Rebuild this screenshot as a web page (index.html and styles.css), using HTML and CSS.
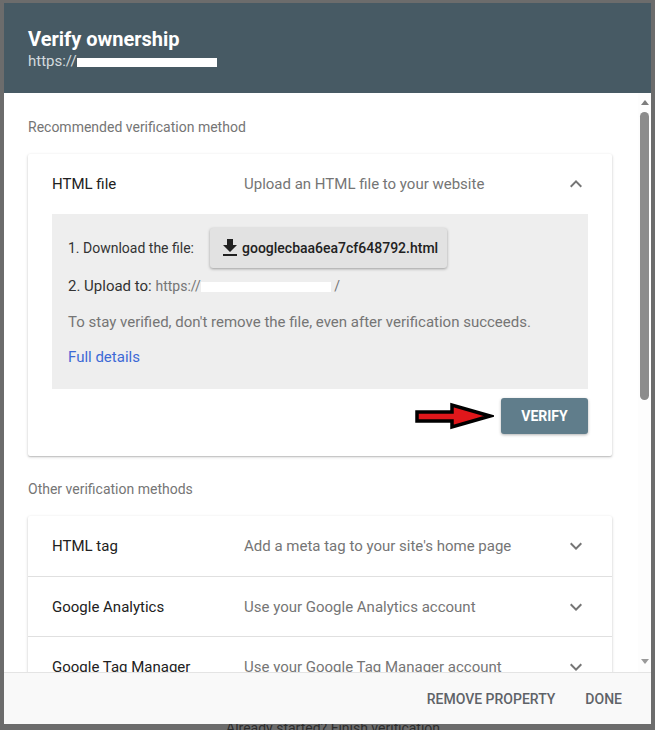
FILE: index.html
```html
<!DOCTYPE html>
<html lang="en">
<head>
<meta charset="utf-8">
<title>Verify ownership</title>
<link rel="stylesheet" href="styles.css">
</head>
<body>
<div class="page">
  <div class="dialog">
    <header class="dlg-head">
      <h1 class="dlg-title">Verify ownership</h1>
      <div class="dlg-url">https://<span class="redact redact-head"></span></div>
    </header>
    <div class="dlg-body">
      <div class="scroll-content">
        <div class="section-label">Recommended verification method</div>
        <div class="card">
          <div class="method-row">
            <div class="method-name">HTML file</div>
            <div class="method-desc">Upload an HTML file to your website</div>
            <svg class="chev" viewBox="0 0 24 24" width="24" height="24"><path d="M12 8l-6 6 1.41 1.41L12 10.83l4.59 4.58L18 14z"/></svg>
          </div>
          <div class="panel">
            <div class="step step-download">
              <span>1. Download the file:</span>
              <span class="file-btn"><svg class="dl-icon" viewBox="0 0 24 24" width="24" height="24"><path d="M19 9h-4V3H9v6H5l7 7 7-7zM5 18v2h14v-2H5z"/></svg>googlecbaa6ea7cf648792.html</span>
            </div>
            <div class="step step-upload">2. Upload to: <span class="muted">https://<span class="redact redact-url"></span> /</span></div>
            <div class="note">To stay verified, don't remove the file, even after verification succeeds.</div>
            <div class="link-row"><a class="link">Full details</a></div>
          </div>
          <div class="card-actions">
            <svg class="arrow" viewBox="0 0 80 28" width="80" height="28"><polygon points="3,10 38,10 38,3 76,14 38,25 38,19 3,19" fill="#e0171b" stroke="#000" stroke-width="3.5" stroke-linejoin="miter"/></svg>
            <span class="verify-btn">VERIFY</span>
          </div>
        </div>
        <div class="section-label section-label-2">Other verification methods</div>
        <div class="card list-card">
          <div class="method-row">
            <div class="method-name">HTML tag</div>
            <div class="method-desc">Add a meta tag to your site's home page</div>
            <svg class="chev" viewBox="0 0 24 24" width="24" height="24"><path d="M16.59 8.59L12 13.170 7.41 8.59 6 10l6 6 6-6z"/></svg>
          </div>
          <div class="method-row">
            <div class="method-name">Google Analytics</div>
            <div class="method-desc">Use your Google Analytics account</div>
            <svg class="chev" viewBox="0 0 24 24" width="24" height="24"><path d="M16.59 8.59L12 13.17 7.41 8.59 6 10l6 6 6-6z"/></svg>
          </div>
          <div class="method-row">
            <div class="method-name">Google Tag Manager</div>
            <div class="method-desc">Use your Google Tag Manager account</div>
            <svg class="chev" viewBox="0 0 24 24" width="24" height="24"><path d="M16.59 8.59L12 13.17 7.41 8.59 6 10l6 6 6-6z"/></svg>
          </div>
        </div>
      </div>
      <div class="scrollbar">
        <span class="sb-up"></span>
        <span class="sb-thumb"></span>
        <span class="sb-down"></span>
      </div>
    </div>
    <footer class="dlg-foot">
      <span class="foot-btn">REMOVE PROPERTY</span>
      <span class="foot-btn">DONE</span>
    </footer>
  </div>
  <div class="behind">Already started? Finish verification</div>
</div>
</body>
</html>
```

FILE: styles.css
```css
html, body {
  margin: 0;
  padding: 0;
}
body {
  background: #6c6c6c;
  font-family: Roboto, "Liberation Sans", Arial, sans-serif;
  width: 655px;
  height: 730px;
  overflow: hidden;
}
.page {
  padding: 3px 4px 0 4px;
}
.dialog {
  position: relative;
  z-index: 1;
  height: 721px;
  background: #fff;
  display: flex;
  flex-direction: column;
  overflow: hidden;
}
.dlg-head {
  flex: none;
  box-sizing: border-box;
  height: 90px;
  background: #475a64;
  padding: 24px 24px 0 24px;
}
.dlg-title {
  margin: 0;
  font-size: 20px;
  line-height: 24px;
  font-weight: 700;
  color: #fff;
}
.dlg-url {
  font-size: 15px;
  line-height: 20px;
  color: #d3dade;
}
.redact {
  display: inline-block;
  background: #fff;
}
.redact-head {
  width: 140px;
  height: 9px;
  vertical-align: -1px;
}
.dlg-body {
  flex: 1;
  min-height: 0;
  display: flex;
  overflow: hidden;
}
.scroll-content {
  flex: 1;
  min-width: 0;
  padding: 24px 26px 0 24px;
  overflow: hidden;
}
.section-label {
  font-size: 14px;
  line-height: 20px;
  color: #757575;
  margin-bottom: 17px;
}
.section-label-2 {
  margin-top: 23px;
}
.card {
  background: #fff;
  border-radius: 2px;
  box-shadow: 0 1px 3px rgba(0, 0, 0, 0.22), 0 1px 1px rgba(0, 0, 0, 0.1);
}
.method-row {
  height: 60px;
  display: flex;
  align-items: center;
  padding: 0 24px;
  font-size: 15px;
}
.list-card .method-row + .method-row {
  border-top: 1px solid #e0e0e0;
  height: 59px;
}
.method-name {
  flex: none;
  width: 192px;
  color: #212121;
}
.method-desc {
  flex: 1;
  color: #757575;
}
.chev {
  flex: none;
  fill: #757575;
}
.panel {
  margin: 0 24px;
  background: #eeeeee;
  padding: 14px 16px 22px;
}
.step {
  font-size: 14px;
  line-height: 20px;
  color: #333;
}
.step-download {
  display: flex;
  align-items: center;
  gap: 16px;
  height: 40px;
}
.file-btn {
  display: flex;
  align-items: center;
  height: 40px;
  box-sizing: border-box;
  padding: 0 9px 0 8px;
  background: #e2e2e2;
  border-radius: 3px;
  box-shadow: 0 1px 3px rgba(0, 0, 0, 0.35);
  font-weight: 500;
  color: #212121;
}
.dl-icon {
  fill: #212121;
  flex: none;
}
.step-upload {
  margin-top: 8px;
  font-size: 15px;
}
.muted {
  color: #757575;
  font-size: 14px;
}
.redact-url {
  width: 130px;
  height: 10px;
  vertical-align: -1px;
}
.note {
  margin-top: 16px;
  font-size: 15px;
  line-height: 20px;
  color: #757575;
}
.link-row {
  margin-top: 15px;
  line-height: 20px;
}
.link {
  font-size: 15px;
  color: #3d6ad6;
}
.card-actions {
  display: flex;
  justify-content: flex-end;
  align-items: center;
  gap: 7px;
  padding: 9px 24px 22px;
}
.arrow {
  flex: none;
}
.verify-btn {
  width: 87px;
  height: 36px;
  display: flex;
  align-items: center;
  justify-content: center;
  background: #607d8b;
  color: #fff;
  font-size: 14px;
  font-weight: 700;
  border-radius: 3px;
  box-shadow: 0 1px 3px rgba(0, 0, 0, 0.3);
}
.scrollbar {
  flex: none;
  width: 13px;
  display: flex;
  flex-direction: column;
  align-items: center;
  padding-top: 7px;
  padding-bottom: 8px;
  background: #fdfdfd;
}
.sb-up {
  width: 0;
  height: 0;
  border-left: 4px solid transparent;
  border-right: 4px solid transparent;
  border-bottom: 5px solid #7d7d7d;
}
.sb-thumb {
  margin-top: 7px;
  width: 9px;
  height: 288px;
  border-radius: 5px;
  background: #8c8c8c;
}
.sb-down {
  margin-top: auto;
  width: 0;
  height: 0;
  border-left: 4px solid transparent;
  border-right: 4px solid transparent;
  border-top: 5px solid #9a9a9a;
}
.dlg-foot {
  flex: none;
  box-sizing: border-box;
  height: 52px;
  background: #f9f9f9;
  border-top: 1px solid #e4e4e4;
  display: flex;
  justify-content: flex-end;
  align-items: center;
  gap: 30px;
  padding-right: 29px;
}
.foot-btn {
  font-size: 14px;
  font-weight: 500;
  color: #5f6368;
}
.behind {
  margin-top: -6px;
  padding-left: 222px;
  font-size: 14px;
  line-height: 20px;
  color: #2d2d2d;
}
```
